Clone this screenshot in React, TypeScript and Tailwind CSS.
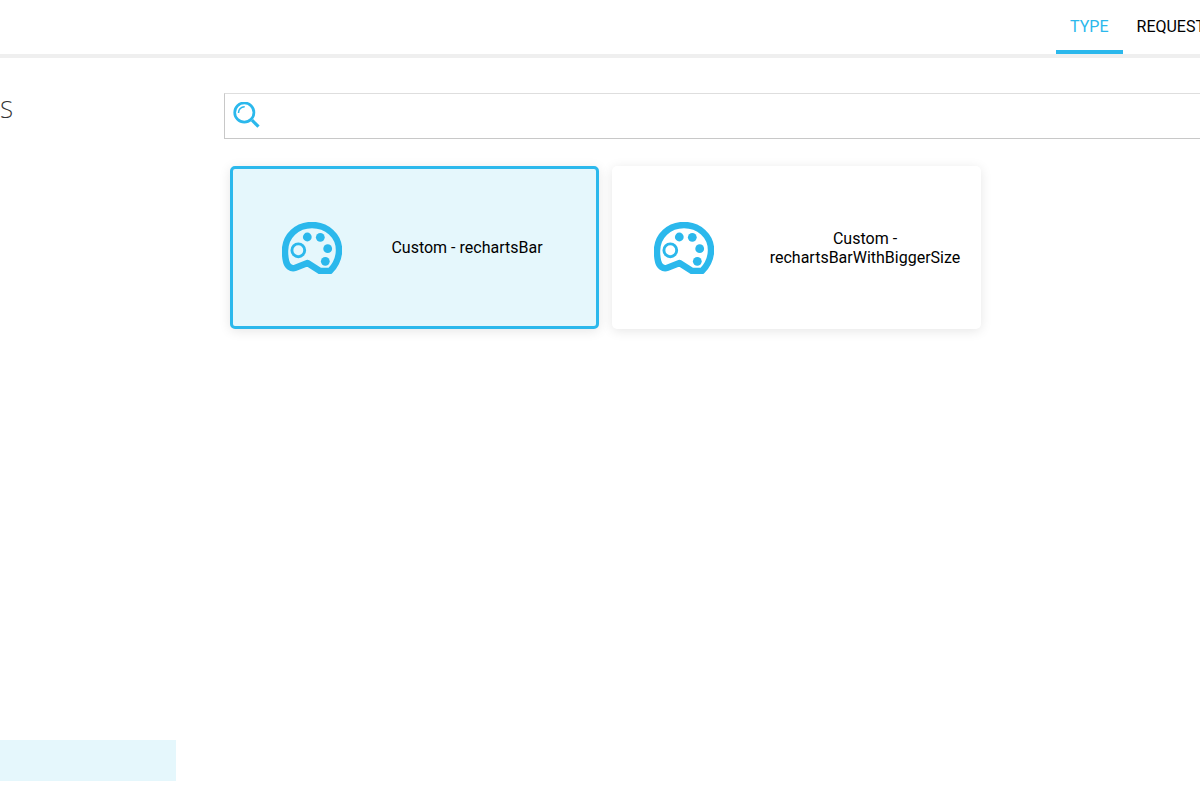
import { useState } from "react";

function PaletteIcon() {
  return (
    <svg width="60" height="52" viewBox="0 0 60 52" fill="none" className="shrink-0" aria-hidden="true">
      <path
        d="M3 29C3 14 15 3 30 3C45 3 57 14 57 28C57 37 53 44 48 49L38 49L25.500 41L13.500 45.800C9 47.500 5 44 4 39C3.300 36 3 32 3 29Z"
        stroke="#2bb8ec"
        strokeWidth="6.400"
        strokeLinejoin="round"
      />
      <g fill="#2bb8ec">
        <circle cx="25.3" cy="15" r="4.4" />
        <circle cx="38.3" cy="15.3" r="4.4" />
        <circle cx="45.7" cy="26.7" r="4.4" />
        <circle cx="43.3" cy="39.3" r="4.4" />
      </g>
      <circle cx="16.3" cy="28.3" r="6.4" stroke="#2bb8ec" strokeWidth="2.900" />
    </svg>
  );
}

function SearchIcon() {
  return (
    <svg width="28" height="28" viewBox="0 1 28 28" fill="none" stroke="#2bb8ec" className="shrink-0" aria-hidden="true">
      <circle cx="11.3" cy="11.5" r="9.600" strokeWidth="2.700" />
      <path d="M5.500 12A6 6 0 0 1 11.700 5.700" strokeWidth="1.600" />
      <path d="M19 19.200L25.500 25.700" strokeWidth="3.200" />
    </svg>
  );
}

const charts = [
  { name: "Custom - rechartsBar", padding: "pl-[49px] pr-1", labelPadding: "pl-0" },
  { name: "Custom - rechartsBarWithBiggerSize", padding: "pl-[39px]", labelPadding: "pl-[38px]" },
];

export default function App() {
  const [selected, setSelected] = useState(charts[0].name);
  return (
    <div className="flex min-h-screen flex-col overflow-hidden bg-white font-['Roboto',sans-serif] text-base text-black">
      <header className="flex justify-end overflow-hidden border-b-4 border-[#efefef]">
        <nav className="-mr-[19px] flex">
          <a href="#type" className="border-b-4 border-[#2bb8ec] px-3.5 pt-[15px] pb-[11px] text-[#2bb8ec]">
            TYPE
          </a>
          <a href="#request" className="border-b-4 border-transparent px-3.5 pt-[15px] pb-[11px]">
            REQUEST
          </a>
        </nav>
      </header>
      <div className="flex flex-1">
        <aside className="flex w-56 shrink-0 flex-col justify-between pt-[35px] pr-12 pb-[19px]">
          <h2 className="font-['Open_Sans',sans-serif] text-2xl font-light text-[#333]">S</h2>
          <div className="h-[41px] bg-[#e5f7fc]" />
        </aside>
        <main className="min-w-0 flex-1 pt-[35px]">
          <label className="flex items-center border-y border-l border-[#c8c8c8] border-t-[#dedede] px-2">
            <SearchIcon />
            <input type="text" aria-label="Search" className="h-11 min-w-0 flex-1 px-2 outline-none" />
          </label>
          <div className="flex flex-wrap gap-[13px] px-1.5 pt-[27px]">
            {charts.map(({ name, padding, labelPadding }) => (
              <button
                key={name}
                type="button"
                aria-pressed={selected === name}
                onClick={() => setSelected(name)}
                className={
                  "flex h-[163px] w-[369px] items-center rounded-[5px] border-3 shadow-[0_2px_12px_rgba(0,0,0,0.1)] " +
                  padding +
                  (selected === name ? " border-[#2bb8ec] bg-[#e5f7fc]" : " border-transparent bg-white")
                }
              >
                <PaletteIcon />
                <span className={"flex-1 text-center leading-[19px] " + labelPadding}>{name}</span>
              </button>
            ))}
          </div>
        </main>
      </div>
    </div>
  );
}
